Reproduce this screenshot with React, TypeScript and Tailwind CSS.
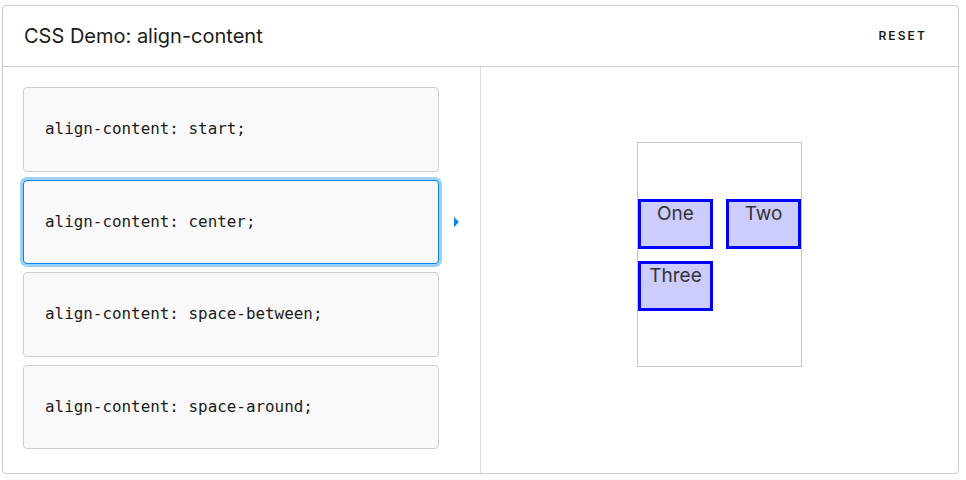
const choices = [
  'align-content: start;',
  'align-content: center;',
  'align-content: space-between;',
  'align-content: space-around;',
];

export default function App() {
  const selected = 1;

  return (
    <div className="w-[966px] h-[480px] bg-white pt-[5px] pl-[2px] font-['Inter',sans-serif] text-[#1b1b1b]">
      <div className="w-[957px] h-[469px] border border-[#cdcdcd] rounded-[4px] flex flex-col overflow-hidden">
        {/* Header */}
        <header className="h-[61px] flex-none flex items-center justify-between border-b border-[#cdcdcd] pl-[21px] pr-[31px]">
          <h1 className="text-[20px] font-normal leading-none -mt-[1px]">CSS Demo: align-content</h1>
          <button className="text-[12px] font-semibold tracking-[2.1px] uppercase">Reset</button>
        </header>

        {/* Body */}
        <div className="flex flex-1 min-h-0">
          {/* Choices */}
          <div className="w-[478px] flex-none border-r border-[#dcdcdc] pt-[20px] pl-[20px] flex flex-col gap-[8px]">
            {choices.map((c, i) => (
              <div key={c} className="flex items-center">
                <div
                  className={`w-[416px] h-[84.5px] flex items-center pl-[21px] rounded-[4px] bg-[#f9f9fb] border font-['DejaVu_Sans_Mono',monospace] text-[15.9px] ${
                    i === selected
                      ? 'border-[#0085f2] ring-[3px] ring-[#9dd2f8]'
                      : 'border-[#cdcdcd]'
                  }`}
                >
                  {c}
                </div>
                {i === selected && (
                  <svg width="6" height="10" viewBox="0 0 6 10" className="ml-[15px]">
                    <path d="M0 0 L5 5 L0 10 Z" fill="#0085f2" />
                  </svg>
                )}
              </div>
            ))}
          </div>

          {/* Output */}
          <div className="flex-1 flex justify-center pt-[75px]">
            <div className="w-[165px] h-[225px] border border-[#c5c5c5] grid grid-cols-[75px_75px] auto-rows-[50px] gap-x-[13px] gap-y-[12px] content-center">
              {['One', 'Two', 'Three'].map((t) => (
                <div
                  key={t}
                  className="border-[3px] border-[#0000ff] bg-[#ccccff] text-center text-[19px] leading-[23px] text-[#333]"
                >
                  {t}
                </div>
              ))}
            </div>
          </div>
        </div>
      </div>
    </div>
  );
}
